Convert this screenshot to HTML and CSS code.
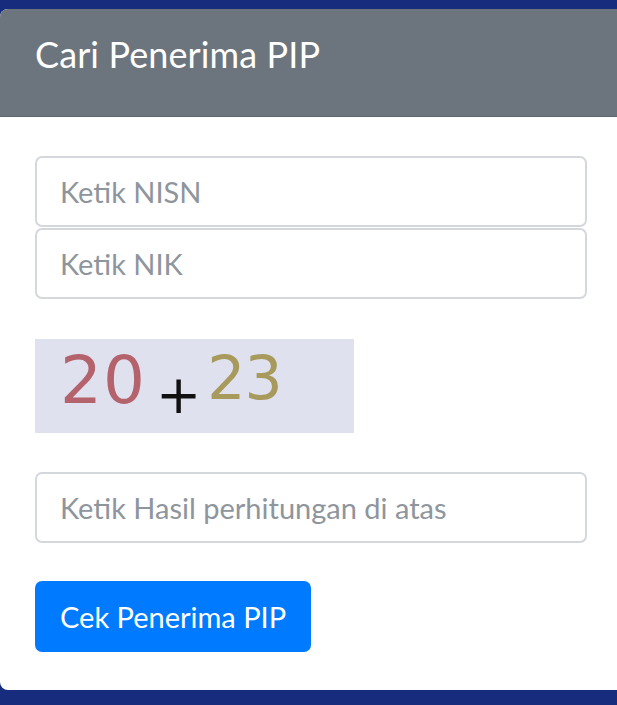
FILE: index.html
```html
<!DOCTYPE html>
<html lang="id">
<head>
    <meta charset="UTF-8">
    <meta name="viewport" content="width=device-width, initial-scale=1.0">
    <title>Cari Penerima PIP</title>
    <link rel="stylesheet" href="styles.css">
</head>
<body>
    <div class="card">
        <div class="card-header">Cari Penerima PIP</div>
        <div class="card-body">
            <input type="text" class="form-control" placeholder="Ketik NISN">
            <input type="text" class="form-control" placeholder="Ketik NIK">

            <div class="captcha">
                <span class="num-a">20</span>
                <span class="op">+</span>
                <span class="num-b">23</span>
            </div>

            <input type="text" class="form-control" placeholder="Ketik Hasil perhitungan di atas">

            <button class="btn-primary">Cek Penerima PIP</button>
        </div>
    </div>
</body>
</html>
```

FILE: styles.css
```css
:root {
    --navy: #172c7c;
    --header-gray: #6c757d;
    --border-color: #d4d8dc;
    --placeholder: #8e959c;
    --blue: #007bff;
}
body, html {
    margin: 0;
    padding: 0;
    background-color: var(--navy);
    font-family: Lato, 'Open Sans', sans-serif;
    overflow: hidden;
}
.card {
    margin-top: 9px;
    width: 640px;
    height: 681px;
    background: #fff;
    border-radius: 8px;
    overflow: hidden;
}
.card-header {
    box-sizing: border-box;
    height: 108px;
    display: flex;
    align-items: center;
    padding: 0 35px 18px;
    background-color: var(--header-gray);
    border-bottom: 1px solid #5f676e;
    color: #fff;
    font-size: 36px;
    letter-spacing: 0.1px;
}
.card-body {
    padding: 39px 35px;
    display: flex;
    flex-direction: column;
    align-items: flex-start;
}
.form-control {
    box-sizing: border-box;
    width: 552px;
    height: 71px;
    margin: 0 0 1px 0;
    padding: 0 23px;
    border: 2px solid var(--border-color);
    border-radius: 7px;
    font-family: inherit;
    font-size: 29px;
    color: #495057;
    background: #fff;
}
.form-control::placeholder {
    color: var(--placeholder);
}
.captcha {
    box-sizing: border-box;
    width: 319px;
    height: 94px;
    margin: 39px 0 39px;
    padding-left: 25px;
    display: flex;
    align-items: center;
    background-color: #dfe1ef;
    font-family: 'DejaVu Sans', sans-serif;
}
.num-a {
    font-size: 66px;
    color: #b4626c;
    letter-spacing: 1px;
    transform: translateY(-6px);
}
.op {
    font-size: 54px;
    color: #111;
    margin: 0 6px 0 10px;
    transform: translateY(8px);
}
.num-b {
    font-size: 60px;
    color: #a79a5c;
    letter-spacing: -1px;
    transform: translateY(-8px);
}
.btn-primary {
    margin-top: 37px;
    height: 71px;
    padding: 0 25px;
    background-color: var(--blue);
    color: #fff;
    border: none;
    border-radius: 7px;
    font-family: inherit;
    font-size: 29px;
    cursor: pointer;
}
```
